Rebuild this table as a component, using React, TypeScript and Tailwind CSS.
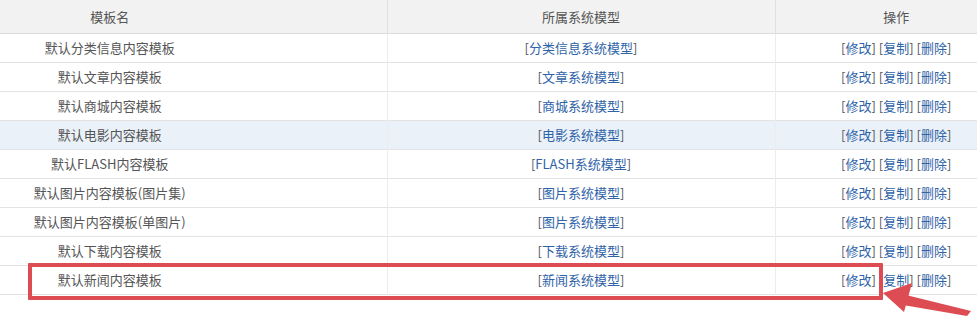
import React from 'react';

interface TemplateRow {
  name: string;
  model: string;
}

const rows: TemplateRow[] = [
  { name: '默认分类信息内容模板', model: '分类信息系统模型' },
  { name: '默认文章内容模板', model: '文章系统模型' },
  { name: '默认商城内容模板', model: '商城系统模型' },
  { name: '默认电影内容模板', model: '电影系统模型' },
  { name: '默认FLASH内容模板', model: 'FLASH系统模型' },
  { name: '默认图片内容模板(图片集)', model: '图片系统模型' },
  { name: '默认图片内容模板(单图片)', model: '图片系统模型' },
  { name: '默认下载内容模板', model: '下载系统模型' },
  { name: '默认新闻内容模板', model: '新闻系统模型' },
];

const Bracketed = ({ label }: { label: string }) => (
  <span>
    [<a href="#" className="text-[#2f63a8]">{label}</a>]
  </span>
);

const App = () => {
  return (
    <div
      className="relative w-[977px] h-[319px] overflow-hidden bg-white text-[13px] text-[#555]"
      style={{ fontFamily: '"Noto Sans CJK SC", "Microsoft YaHei", sans-serif' }}
    >
      <table className="-ml-[167px] w-[1184px] table-fixed border-collapse">
        <colgroup>
          <col className="w-[554px]" />
          <col className="w-[388px]" />
          <col className="w-[242px]" />
        </colgroup>
        <thead>
          <tr className="h-[33px] bg-[#f2f2f2] border-b border-[#dcdcdc]">
            <th className="font-normal text-center border-r border-[#e0e0e0]">模板名</th>
            <th className="font-normal text-center border-r border-[#e0e0e0]">所属系统模型</th>
            <th className="font-normal text-center">操作</th>
          </tr>
        </thead>
        <tbody>
          {rows.map((row, i) => (
            <tr
              key={i}
              className={`h-[29px] border-b border-[#e3e3e3] ${i === 3 ? 'bg-[#eaf1f8]' : 'bg-white'}`}
            >
              <td className="text-center border-r border-[#ececec]">{row.name}</td>
              <td className="text-center border-r border-[#ececec]">
                <Bracketed label={row.model} />
              </td>
              <td className="text-center whitespace-nowrap">
                <Bracketed label="修改" /> <Bracketed label="复制" /> <Bracketed label="删除" />
              </td>
            </tr>
          ))}
        </tbody>
      </table>

      {/* annotation box */}
      <div className="absolute left-[28px] top-[263px] w-[855px] h-[37px] border-4 border-[#dc4c52] rounded-[1px]" />

      {/* annotation arrow */}
      <svg className="absolute left-0 top-0" width="977" height="319" viewBox="0 0 977 319">
        <polygon points="971,311 967,316 903,305 906,295" fill="#dc4c52" />
        <polygon points="883,293 912,283 904,312" fill="#dc4c52" />
      </svg>
    </div>
  );
};

export default App;
